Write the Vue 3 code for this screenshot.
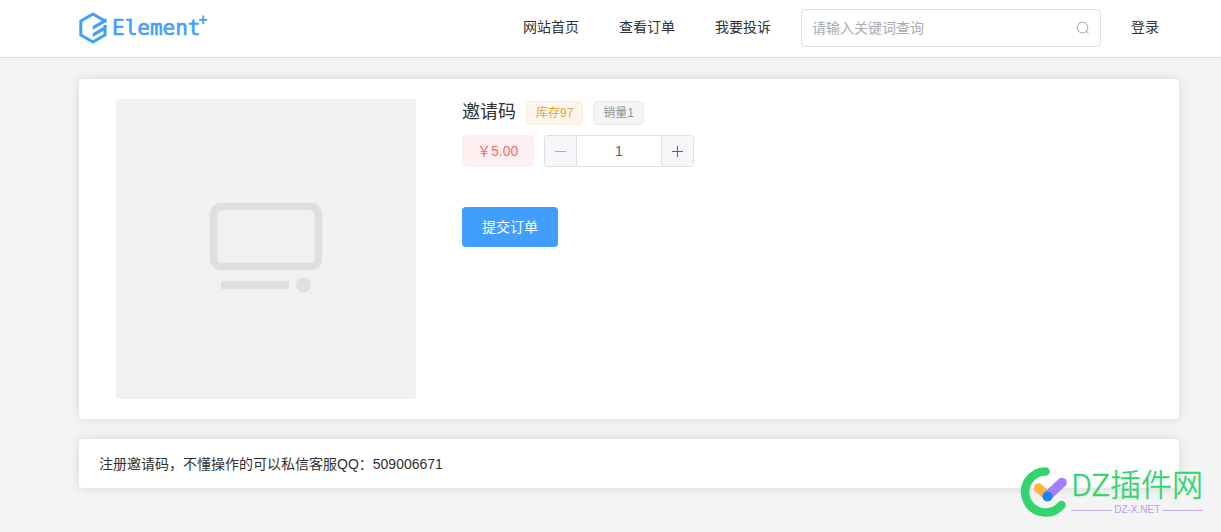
<script setup>
import { ref } from 'vue'

const links = ['网站首页', '查看订单', '我要投诉']
const keyword = ref('')
const quantity = ref(1)
</script>

<template>
  <div class="page">
    <header class="header">
      <a class="logo" href="#" aria-label="Element Plus">
        <svg class="logo-mark" viewBox="0 0 28 32" width="28" height="32" aria-hidden="true">
          <path d="M26 10.500 V9 L14 2 L1.800 9 V23 L14 30 L26 23 V13" fill="none" stroke="#409eff" stroke-width="3" />
          <path d="M13.800 14 L27.500 6 V9.800 L13.800 17.800 Z M13.800 21.200 L27.500 13 V17 L13.800 25 Z" fill="#409eff" />
        </svg>
        <span class="logo-text">Element</span><span class="logo-plus">+</span>
      </a>
      <nav class="nav">
        <a v-for="link in links" :key="link" href="#">{{ link }}</a>
      </nav>
      <form class="search" role="search" @submit.prevent>
        <input v-model="keyword" type="text" placeholder="请输入关键词查询" aria-label="请输入关键词查询" />
        <svg viewBox="0 0 1024 1024" width="14" height="14" aria-hidden="true">
          <path fill="#a8abb2" d="m795.904 750.72 124.992 124.928a32 32 0 0 1-45.248 45.248L750.656 795.904a416 416 0 1 1 45.248-45.248zM480 832a352 352 0 1 0 0-704 352 352 0 0 0 0 704z" />
        </svg>
      </form>
      <a class="login" href="#">登录</a>
    </header>

    <main class="content">
      <section class="card product">
        <div class="cover">
          <svg viewBox="0 0 114 94" width="114" height="94" aria-hidden="true">
            <rect x="4.500" y="4.500" width="105" height="60" rx="8" fill="none" stroke="#dfdfdf" stroke-width="7.500" />
            <rect x="12" y="79" width="68" height="8" rx="1" fill="#dfdfdf" />
            <circle cx="94.500" cy="83" r="7.500" fill="#dfdfdf" />
          </svg>
        </div>
        <div class="info">
          <div class="title-row">
            <h1>邀请码</h1>
            <span class="tag warning">库存97</span>
            <span class="tag neutral">销量1</span>
          </div>
          <div class="price-row">
            <span class="price">￥5.00</span>
            <div class="stepper">
              <button type="button" aria-label="减少数量" :disabled="quantity <= 1" @click="quantity--">
                <svg viewBox="0 0 14 14" width="14" height="14" aria-hidden="true"><path d="M1 7.500H12" stroke="currentColor" /></svg>
              </button>
              <input v-model.number="quantity" type="text" inputmode="numeric" aria-label="数量" />
              <button type="button" aria-label="增加数量" @click="quantity++">
                <svg viewBox="0 0 14 14" width="14" height="14" aria-hidden="true"><path d="M1 7.500H12M6.500 2V13" stroke="currentColor" /></svg>
              </button>
            </div>
          </div>
          <button class="submit" type="button">提交订单</button>
        </div>
      </section>

      <section class="card note">注册邀请码，不懂操作的可以私信客服QQ：509006671</section>
    </main>

    <div class="watermark">
      <svg viewBox="0 0 48 50" width="48" height="50" aria-hidden="true">
        <path d="M25.500 4.500 A20.500 20.500 0 1 0 41.500 38" fill="none" stroke="#32d46e" stroke-width="8.500" stroke-linecap="round" />
        <path d="M18.500 21 L27.500 29" stroke="#fdb43c" stroke-width="9.500" stroke-linecap="round" />
        <path d="M27.500 29 L42 15.500" stroke="#a37cff" stroke-width="9.500" stroke-linecap="round" />
        <circle cx="27.500" cy="29.500" r="5" fill="#1284ff" />
      </svg>
      <div class="watermark-text">
        <div class="watermark-name">DZ插件网</div>
        <div class="watermark-site">DZ-X.NET</div>
      </div>
    </div>
  </div>
</template>

<style>
body {
  margin: 0;
  background: #f4f4f4;
}
</style>

<style scoped>
.page {
  position: relative;
  box-sizing: border-box;
  min-height: 100vh;
  font-family: "Liberation Sans", "Noto Sans CJK SC", sans-serif;
  font-size: 14px;
  color: #303133;
}

a {
  color: inherit;
  text-decoration: none;
}

button,
input {
  font: inherit;
}

.header {
  display: flex;
  align-items: center;
  box-sizing: border-box;
  height: 58px;
  padding: 0 62px 2px 79px;
  background: #fff;
  border-bottom: 1px solid #dcdfe6;
}

.logo {
  display: flex;
  align-items: center;
  margin-right: auto;
  color: #409eff;
  font-family: "DejaVu Sans Mono", monospace;
}

.logo-mark {
  margin-right: 5px;
}

.logo-text {
  font-size: 21px;
  line-height: 32px;
  -webkit-text-stroke: 0.6px #409eff;
}

.logo-plus {
  align-self: flex-start;
  margin-left: -2px;
  font-size: 15px;
  font-weight: bold;
  line-height: 16px;
}

.nav {
  display: flex;
  gap: 40px;
}

.nav a,
.login {
  padding-bottom: 2px;
  line-height: 22px;
}

.search {
  position: relative;
  width: 300px;
  margin: 0 30px;
}

.search input {
  display: block;
  box-sizing: border-box;
  width: 100%;
  height: 38px;
  padding: 0 36px 0 10px;
  border: 1px solid #dcdfe6;
  border-radius: 4px;
  outline: none;
  color: #606266;
}

.search input::placeholder {
  color: #a8abb2;
}

.search svg {
  position: absolute;
  top: 12px;
  right: 11px;
}

.content {
  display: flex;
  flex-direction: column;
  gap: 20px;
  padding: 21px 42px 44px 79px;
}

.card {
  background: #fff;
  border-radius: 4px;
  box-shadow: 0 0 12px rgba(0, 0, 0, 0.12);
}

.product {
  display: flex;
  gap: 46px;
  padding: 20px 20px 20px 37px;
}

.cover {
  display: flex;
  align-items: center;
  justify-content: center;
  width: 300px;
  height: 300px;
  border-radius: 3px;
  background: #f1f1f1;
}

.title-row {
  display: flex;
  align-items: flex-end;
  gap: 10px;
  height: 26px;
}

h1 {
  margin: 0;
  font-size: 18px;
  font-weight: normal;
  line-height: 26px;
}

.tag {
  box-sizing: border-box;
  height: 24px;
  padding: 0 9px;
  border: 1px solid;
  border-radius: 4px;
  font-size: 12px;
  line-height: 22px;
}

.warning {
  color: #e6a23c;
  background: #fdf6ec;
  border-color: #faecd8;
}

.neutral {
  color: #909399;
  background: #f4f4f5;
  border-color: #e9e9eb;
}

.price-row {
  display: flex;
  gap: 10px;
  margin-top: 10px;
}

.price {
  box-sizing: border-box;
  min-width: 72px;
  padding: 0 15px;
  border-radius: 4px;
  color: #f56c6c;
  background: #fef0f0;
  line-height: 32px;
}

.stepper {
  display: flex;
  box-sizing: border-box;
  width: 150px;
  height: 32px;
  border: 1px solid #dcdfe6;
  border-radius: 4px;
  overflow: hidden;
}

.stepper button {
  display: flex;
  flex: 0 0 31px;
  align-items: center;
  justify-content: center;
  padding: 0;
  border: 0;
  color: #606266;
  background: #f5f7fa;
}

.stepper button:disabled {
  color: #a8abb2;
}

.stepper input {
  flex: 1;
  min-width: 0;
  padding: 0;
  border: solid #dcdfe6;
  border-width: 0 1px;
  outline: none;
  color: #606266;
  text-align: center;
}

.submit {
  display: block;
  height: 40px;
  margin-top: 40px;
  padding: 0 20px 2px;
  border: 0;
  border-radius: 4px;
  color: #fff;
  background: #409eff;
}

.note {
  padding: 15px 20px 13px;
  line-height: 21px;
}

.watermark {
  position: absolute;
  right: 18px;
  bottom: 15px;
  display: flex;
  gap: 3px;
  pointer-events: none;
}

.watermark-name {
  color: #32d46e;
  font-family: Roboto, "Noto Sans CJK SC", sans-serif;
  font-size: 31px;
  font-weight: 300;
  line-height: 38px;
  -webkit-text-stroke: 0.5px #32d46e;
}

.watermark-site {
  display: flex;
  align-items: center;
  gap: 2px;
  color: #b69cf5;
  font-family: "Liberation Sans", sans-serif;
  font-size: 10px;
  line-height: 10px;
}

.watermark-site::before,
.watermark-site::after {
  content: "";
  flex: 1;
  height: 1px;
  background: #c3aef8;
}
</style>
